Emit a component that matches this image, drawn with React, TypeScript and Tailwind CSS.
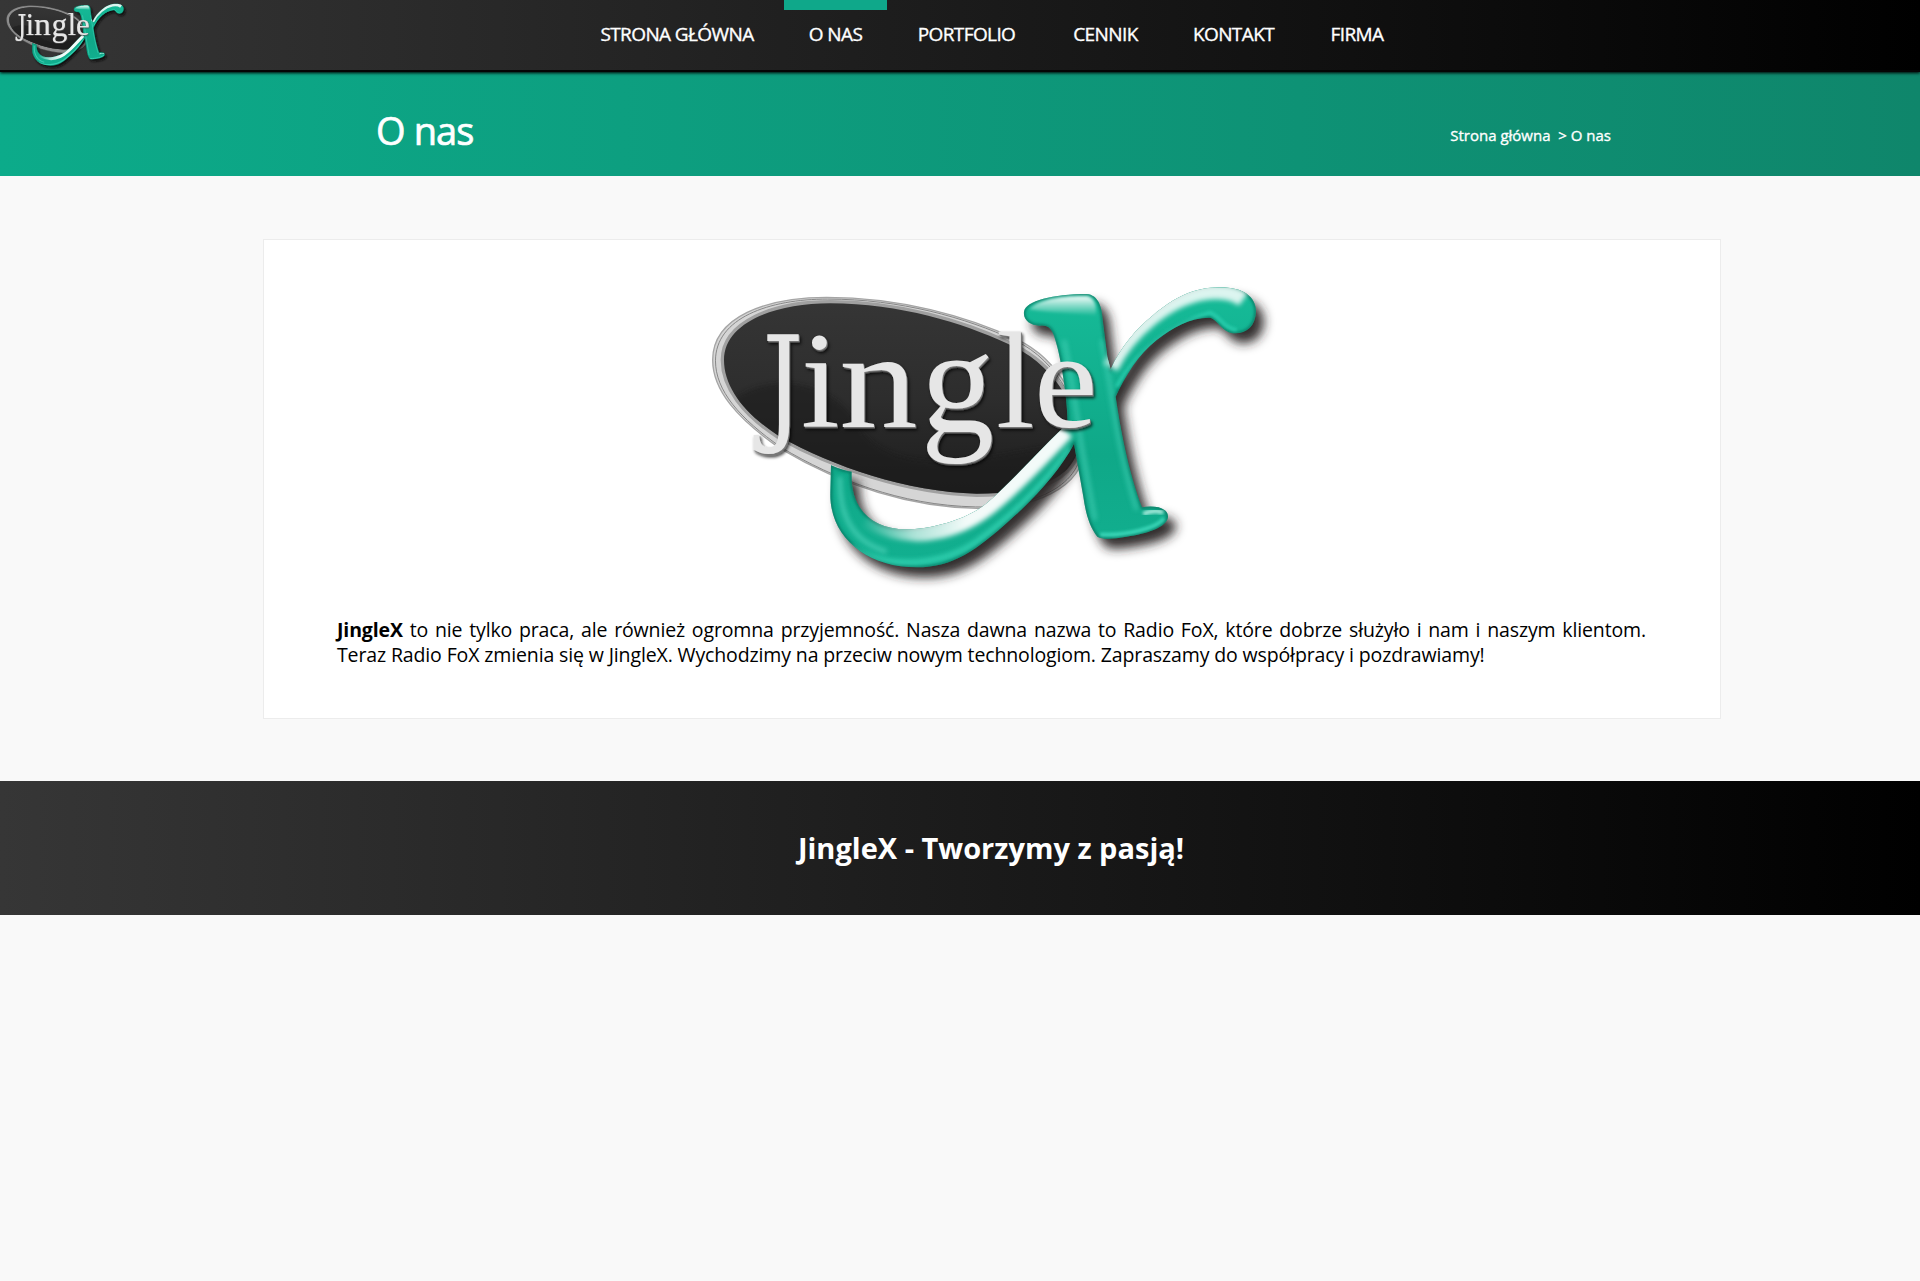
type LogoProps = { id: string; className: string; small?: boolean };

const RING =
  'M38 240 C38 110 200 52 380 52 C600 52 800 108 950 178 C1085 240 1158 400 1154 500 C1150 630 990 688 830 685 C600 680 400 600 240 505 C110 415 38 330 38 240Z';
const DISC =
  'M72 240 C72 130 220 70 390 70 C600 70 790 130 920 190 C1060 250 1136 380 1136 490 C1126 600 1000 641 830 641 C620 635 400 560 240 470 C130 400 72 320 72 240Z';
const CROSS =
  'M972 95 C977 62 1060 42 1160 42 C1195 45 1206 80 1208 120 L1222 230 L1232 268 C1262 200 1310 145 1360 105 C1420 55 1480 22 1560 22 C1630 22 1668 50 1668 95 C1666 138 1640 160 1605 160 C1565 158 1555 120 1530 113 C1470 112 1420 142 1370 180 C1315 222 1275 290 1247 350 C1260 440 1285 575 1326 682 C1370 675 1406 685 1404 712 C1400 742 1340 762 1280 770 C1240 777 1210 779 1192 770 C1168 740 1157 700 1150 650 L1122 492 C1080 570 1010 650 930 720 C830 810 760 862 650 862 C500 862 388 770 391 640 L393 556 C415 566 435 572 455 575 C450 670 500 748 620 748 C690 748 800 720 860 670 C930 610 1010 520 1080 452 L1103 430 C1102 350 1082 230 1066 180 C1056 142 1042 135 1020 137 C990 136 969 120 972 95Z';

function Logo({ id, className, small }: LogoProps) {
  return (
    <svg viewBox="0 0 1740 960" preserveAspectRatio="none" className={className} role="img" aria-label="JingleX">
      <defs>
        <linearGradient id={id + 'disc'} x1="0" y1="0" x2="0" y2="1">
          <stop offset="0" stopColor="#353535" />
          <stop offset="0.5" stopColor="#2d2d2d" />
          <stop offset="1" stopColor="#1d1d1d" />
        </linearGradient>
        <linearGradient id={id + 'teal'} x1="0" y1="0" x2="0" y2="1">
          <stop offset="0" stopColor="#16bb98" />
          <stop offset="0.6" stopColor="#0fa888" />
          <stop offset="1" stopColor="#12b090" />
        </linearGradient>
        <linearGradient id={id + 'tip'} x1="0" y1="0" x2="0" y2="1">
          <stop offset="0" stopColor="#fff" stopOpacity="0.95" />
          <stop offset="1" stopColor="#fff" stopOpacity="0" />
        </linearGradient>
        <linearGradient id={id + 'sheen'} gradientUnits="userSpaceOnUse" x1="480" y1="0" x2="800" y2="0">
          <stop offset="0" stopColor="#fff" stopOpacity="0" />
          <stop offset="0.5" stopColor="#fff" stopOpacity="0.65" />
          <stop offset="1" stopColor="#fff" stopOpacity="0.95" />
        </linearGradient>
        <filter id={id + 'b8'} x="-20%" y="-20%" width="140%" height="140%"><feGaussianBlur stdDeviation="8" /></filter>
        <filter id={id + 'b16'} x="-20%" y="-20%" width="140%" height="140%"><feGaussianBlur stdDeviation="16" /></filter>
        <filter id={id + 'b4'} x="-20%" y="-20%" width="140%" height="140%"><feGaussianBlur stdDeviation="4" /></filter>
        <filter id={id + 'bevel'} x="-5%" y="-5%" width="112%" height="115%">
          <feDropShadow dx="3" dy="4" stdDeviation="1" floodColor="#777" floodOpacity="1" />
          <feDropShadow dx="4" dy="6" stdDeviation="4" floodColor="#000" floodOpacity="0.75" />
        </filter>
        <clipPath id={id + 'cross'}><path d={CROSS} /></clipPath>
        <clipPath id={id + 'clip'}><path d={DISC} /></clipPath>
      </defs>
      <path d={RING} fill={small ? '#8b8b8b' : '#d5d5d5'} stroke={small ? '#8b8b8b' : '#a5a5a5'} strokeWidth="4" />
      <path d={DISC} fill={`url(#${id}disc)`} stroke="#a0a0a0" strokeWidth={small ? 2 : 20} />
      {!small && <path d={RING} fill="none" stroke="#858585" strokeWidth="3" transform="translate(9 6) scale(.985)" />}
      <path d={DISC} fill={`url(#${id}disc)`} />
      <g clipPath={`url(#${id}clip)`}>
        <path d="M60 390 C180 270 400 280 490 460 C560 540 680 560 850 535 L1160 480 V700 H60Z" fill="#1c1c1c" opacity=".55" filter={`url(#${id}b8)`} />
      </g>
      <g filter={`url(#${id}b16)`}>
        <path d={CROSS} fill={small ? '#111' : '#262324'} opacity=".95" transform="translate(24 30)" />
      </g>
      <path d={CROSS} fill={`url(#${id}teal)`} />
      <g clipPath={`url(#${id}cross)`}>
        <path d={CROSS} fill="none" stroke="#07604f" strokeWidth="8" opacity=".75" filter={`url(#${id}b4)`} />
        <path d="M450 800 C560 870 720 860 830 785 C950 700 1060 580 1110 505" fill="none" stroke="#3ddcbc" strokeWidth="16" opacity=".75" filter={`url(#${id}b8)`} />
        <path d="M420 590 C415 720 470 790 560 815" fill="none" stroke="#54d8bf" strokeWidth="14" opacity=".7" filter={`url(#${id}b8)`} />
        <path d="M500 715 C660 800 800 735 890 655 C970 585 1035 515 1095 450" fill="none" stroke={`url(#${id}sheen)`} strokeWidth="58" filter={`url(#${id}b8)`} />
        <path d="M1232 262 C1285 155 1400 57 1510 38 C1560 30 1600 36 1630 58" fill="none" stroke="#fff" strokeWidth="46" opacity=".85" filter={`url(#${id}b8)`} />
        <path d="M1250 320 C1310 215 1400 135 1530 98 C1560 110 1570 145 1610 150" fill="none" stroke="#2cd0b0" strokeWidth="12" opacity=".8" filter={`url(#${id}b4)`} />
        <path d="M988 88 C1016 54 1100 46 1162 48 C1188 56 1190 84 1188 108 C1120 98 1050 100 988 88Z" fill={`url(#${id}tip)`} filter={`url(#${id}b4)`} />
        <path d="M1092 180 C1110 260 1130 400 1145 500 L1185 720" fill="none" stroke="#52d9c0" strokeWidth="10" opacity=".7" filter={`url(#${id}b8)`} />
        <path d="M1205 180 C1240 340 1240 460 1310 690" fill="none" stroke="#49d6bb" strokeWidth="12" opacity=".6" filter={`url(#${id}b8)`} />
        <path d="M1200 764 C1280 768 1370 745 1392 715" fill="none" stroke="#45e0c2" strokeWidth="12" opacity=".8" filter={`url(#${id}b4)`} />
        <path d="M1330 702 C1350 692 1380 690 1388 700" fill="none" stroke="#d8fff6" strokeWidth="14" opacity=".7" filter={`url(#${id}b4)`} />
      </g>
      <g fill="#e6e6e6" filter={`url(#${id}bevel)`}>
        <text transform="translate(187 440) scale(.8 1)" fontSize="384" className="font-['DejaVu_Serif',serif]">J</text>
        <g fontSize="416" className="font-['Liberation_Serif',serif]">
          <text x="303" y="440">i</text>
          <text transform="translate(418 440) scale(1.13 1)">n</text>
          <text transform="translate(662 457) scale(1.06 1.08)">g</text>
          <text x="888" y="440">l</text>
          <text transform="translate(1002 440) scale(1.03 1)">e</text>
        </g>
      </g>
    </svg>
  );
}

const NAV = [
  { label: 'STRONA GŁÓWNA', box: 'w-[212px]', active: false },
  { label: 'O NAS', box: 'w-[103px]', active: true },
  { label: 'PORTFOLIO', box: 'w-[157px]', active: false },
  { label: 'CENNIK', box: 'w-[119px]', active: false },
  { label: 'KONTAKT', box: 'w-[135px]', active: false },
  { label: 'FIRMA', box: 'w-[110px]', active: false },
];

export default function App() {
  return (
    <div className="min-h-[1281px] bg-[#f9f9f9] font-['Open_Sans',sans-serif] text-black">
      <header className="relative z-10 flex h-[72px] border-b-2 border-[#050505] bg-linear-to-r/srgb from-[#363636] to-black shadow-[0_1px_3px_#000]">
        <Logo id="s" small className="mt-[2px] ml-[4px] h-[71px] w-[125px] shrink-0" />
        <nav className="ml-[442px] flex gap-[1px]">
          {NAV.map((n) => (
            <a key={n.label} className={`${n.box} flex h-[70px] shrink-0 flex-col items-center text-[19px] leading-[26px] tracking-[-0.6px] whitespace-nowrap text-white [-webkit-text-stroke:0.35px_white]`}>
              <span className={n.active ? 'h-[10px] w-full bg-[#0fa88a]' : 'h-[10px] w-full'} />
              <span className="mt-[11px]">{n.label}</span>
            </a>
          ))}
        </nav>
      </header>
      <section className="flex h-[104px] items-start justify-between bg-linear-to-r/srgb from-[#0cab8a] to-[#0f866b] pr-[309px] pl-[376px] text-white">
        <h1 className="mt-[31px] text-[38px] leading-[54px] tracking-[-0.9px] [-webkit-text-stroke:0.7px_white]">O nas</h1>
        <p className="mt-[52px] text-[15px] leading-[22px] whitespace-pre [-webkit-text-stroke:0.35px_white]">Strona główna  &gt; O nas</p>
      </section>
      <main className="flex flex-col pt-[63px] pb-[62px]">
        <article className="ml-[263px] flex h-[480px] w-[1458px] flex-col border border-[#ececec] bg-white px-[73px]">
          <Logo id="b" className="mt-[40px] ml-[363px] h-[320px] w-[580px]" />
          <p className="mt-[17px] w-[1309px] text-justify text-[19.5px] leading-[25px] tracking-[-0.13px]">
            <b>JingleX</b> to nie tylko praca, ale również ogromna przyjemność. Nasza dawna nazwa to Radio FoX, które dobrze służyło i nam i naszym klientom.{' '}
            <br className="hidden" />Teraz Radio FoX zmienia się w JingleX. Wychodzimy na przeciw nowym technologiom. Zapraszamy do współpracy i pozdrawiamy!
          </p>
        </article>
      </main>
      <footer className="flex h-[134px] justify-center bg-linear-to-r/srgb from-[#363636] to-black pl-[62px] text-white">
        <h2 className="mt-[47px] text-[29px] leading-[40px] font-bold">JingleX - Tworzymy z pasją!</h2>
      </footer>
    </div>
  );
}
